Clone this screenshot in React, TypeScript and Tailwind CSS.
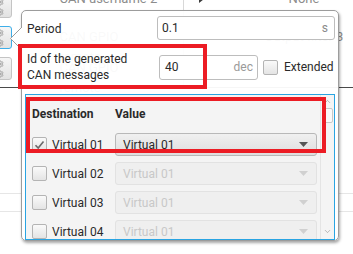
import { ChevronDown, ChevronUp, Settings } from 'lucide-react';

const bgRows = [
  { name: 'CAN username 2', value: 'None', arrow: true, focused: false },
  { name: 'CAN GPIO remote', value: 'Output filter 3', arrow: false, focused: true },
  { name: 'CAN GPIO remote', value: 'None', arrow: false, focused: false },
];

const destinations = ['Virtual 01', 'Virtual 02', 'Virtual 03', 'Virtual 04'];

function GearButton({ focused }: { focused: boolean }) {
  return (
    <div
      className={`mt-[1px] -ml-[12px] flex h-[23px] w-[24px] flex-col items-center justify-center gap-[2px] rounded-[3px] border bg-gradient-to-b from-[#f6f6f6] to-[#e2e2e2] ${
        focused ? 'border-[#3daee9]' : 'border-[#c4c4c4]'
      }`}
    >
      <Settings size={8} strokeWidth={3} className="text-[#a0a0a0]" />
      <Settings size={8} strokeWidth={3} className="text-[#a0a0a0]" />
    </div>
  );
}

function Checkbox({ checked }: { checked?: boolean }) {
  return (
    <div className="flex h-[15px] w-[15px] shrink-0 items-center justify-center rounded-[2px] border border-[#b4b4b4] bg-gradient-to-b from-[#fafafa] to-[#e4e4e4]">
      {checked && (
        <svg width="11" height="10" viewBox="0 0 11 10">
          <path d="M1.5 5.2 L4.2 8 L9.5 1.5" fill="none" stroke="#6a6a6a" strokeWidth="1.6" />
        </svg>
      )}
    </div>
  );
}

function Select({ disabled }: { disabled?: boolean }) {
  return (
    <div
      className={`flex h-[23px] w-[202px] items-center justify-between rounded-[3px] border pl-[7px] pr-[8px] ${
        disabled
          ? 'border-[#e2e2e2] bg-[#efefef] text-[#c8c8c8]'
          : 'border-[#b8b8b8] bg-gradient-to-b from-[#f0f0f0] to-[#dedede] text-[#2a2a2a]'
      }`}
    >
      <span>Virtual 01</span>
      <svg width="9" height="5" viewBox="0 0 9 5">
        <path d="M0 0 H9 L4.5 5 Z" fill={disabled ? '#d0d0d0' : '#555'} />
      </svg>
    </div>
  );
}

export default function App() {
  return (
    <div className="relative h-[254px] w-[353px] overflow-hidden bg-white font-['Roboto',sans-serif] text-[12px] text-[#2a2a2a]">
      {/* background list behind the popup */}
      <div className="flex flex-col">
        <div className="-mt-[6px] flex flex-col">
          {bgRows.map((row, i) => (
            <div key={i} className="flex h-[31px] items-start">
              <GearButton focused={row.focused} />
              <div className="ml-[48px] mt-[2px] w-[100px] text-[13px] text-[#8c8c8c]">
                {i === 0 ? <span className="relative -top-[7px]">{row.name}</span> : <span>{row.name}</span>}
              </div>
              <div className="ml-[25px] h-[31px] w-px bg-[#d8d8d8]" />
              <div className="ml-[2px] w-[24px]">
                {row.arrow && (
                  <svg width="22" height="14" viewBox="0 0 22 14" className="-mt-[5px]">
                    <path d="M0 4 H13 V0 L22 7 L13 14 V10 H0 Z" fill="#3c3c3c" />
                  </svg>
                )}
              </div>
              <div className="ml-[46px] mt-[2px] w-[100px] text-center text-[13px] text-[#8c8c8c]">
                {i === 0 ? <span className="relative -top-[7px]">{row.value}</span> : <span>{row.value}</span>}
              </div>
            </div>
          ))}
        </div>
        <div className="h-px bg-[#4a4a4a]" />
        <div className="mt-[105px] h-px bg-[#e6e6e6]" />
        <div className="mt-[17px] h-px bg-[#e6e6e6]" />
      </div>

      {/* popup */}
      <div className="absolute left-[21px] top-[10px] flex h-[231px] w-[318px] flex-col rounded-[5px] border border-[#9c9c9c] bg-white/95 px-[3px] pt-[5px] shadow-[1px_2px_3px_rgba(0,0,0,0.35)]">
        <div className="flex items-center">
          <span className="ml-[2px] mt-[1px]">Period</span>
          <div className="ml-auto flex h-[24px] w-[178px] items-center justify-between rounded-[3px] border border-[#bdbdbd] bg-white pl-[4px] pr-[6px]">
            <span>0.1</span>
            <span className="text-[#8a8a8a]">s</span>
          </div>
        </div>

        <div className="mt-[11px] flex items-center">
          <span className="ml-[2px] w-[132px] leading-[16px]">
            Id of the generated
            <br />
            CAN messages
          </span>
          <div className="flex h-[25px] w-[99px] items-center justify-between rounded-[3px] border border-[#bdbdbd] bg-white pl-[5px] pr-[4px]">
            <span>40</span>
            <span className="text-[#9a9a9a]">dec</span>
          </div>
          <div className="ml-[5px]">
            <Checkbox />
          </div>
          <span className="ml-[6px]">Extended</span>
        </div>

        <div className="mt-[11px] flex h-[150px] overflow-hidden border border-[#29a4e2] bg-[#f4f4f4]">
          <div className="flex flex-1 flex-col">
            <div className="flex h-[35px] shrink-0 items-center pt-[3px] font-bold">
              <span className="ml-[6px] w-[83px]">Destination</span>
              <span>Value</span>
            </div>
            {destinations.map((d, i) => (
              <div key={d} className="flex h-[29px] shrink-0 items-center">
                <div className="ml-[6px]">
                  <Checkbox checked={i === 0} />
                </div>
                <span className="ml-[5px] w-[63px]">{d}</span>
                <Select disabled={i !== 0} />
              </div>
            ))}
          </div>
          <div className="flex w-[14px] flex-col items-center border-l border-[#e4e4e4] bg-[#f4f4f4]">
            <ChevronUp size={9} strokeWidth={1.5} className="mt-[2px] text-[#8a8a8a]" />
            <div className="mt-[2px] h-[15px] w-[10px] rounded-[2px] border border-[#c8c8c8] bg-[#fafafa]" />
            <div className="flex-1" />
            <ChevronDown size={9} strokeWidth={1.5} className="mb-[3px] text-[#8a8a8a]" />
          </div>
        </div>
      </div>

      {/* popup tail */}
      <svg className="absolute left-[10px] top-[27px]" width="13" height="23" viewBox="0 0 13 23">
        <path d="M13 0 L12 0 L0.5 11.5 L12 23 L13 23 Z" fill="#fff" />
        <path d="M12 0 L0.5 11.5 L12 23" fill="none" stroke="#9c9c9c" strokeWidth="1" />
      </svg>

      {/* annotation boxes */}
      <div className="absolute left-[18px] top-[44px] h-[45px] w-[189px] border-[4px] border-[#ec1c24]" />
      <div className="absolute left-[26px] top-[97px] h-[56px] w-[300px] border-[4px] border-[#ec1c24]" />
    </div>
  );
}
